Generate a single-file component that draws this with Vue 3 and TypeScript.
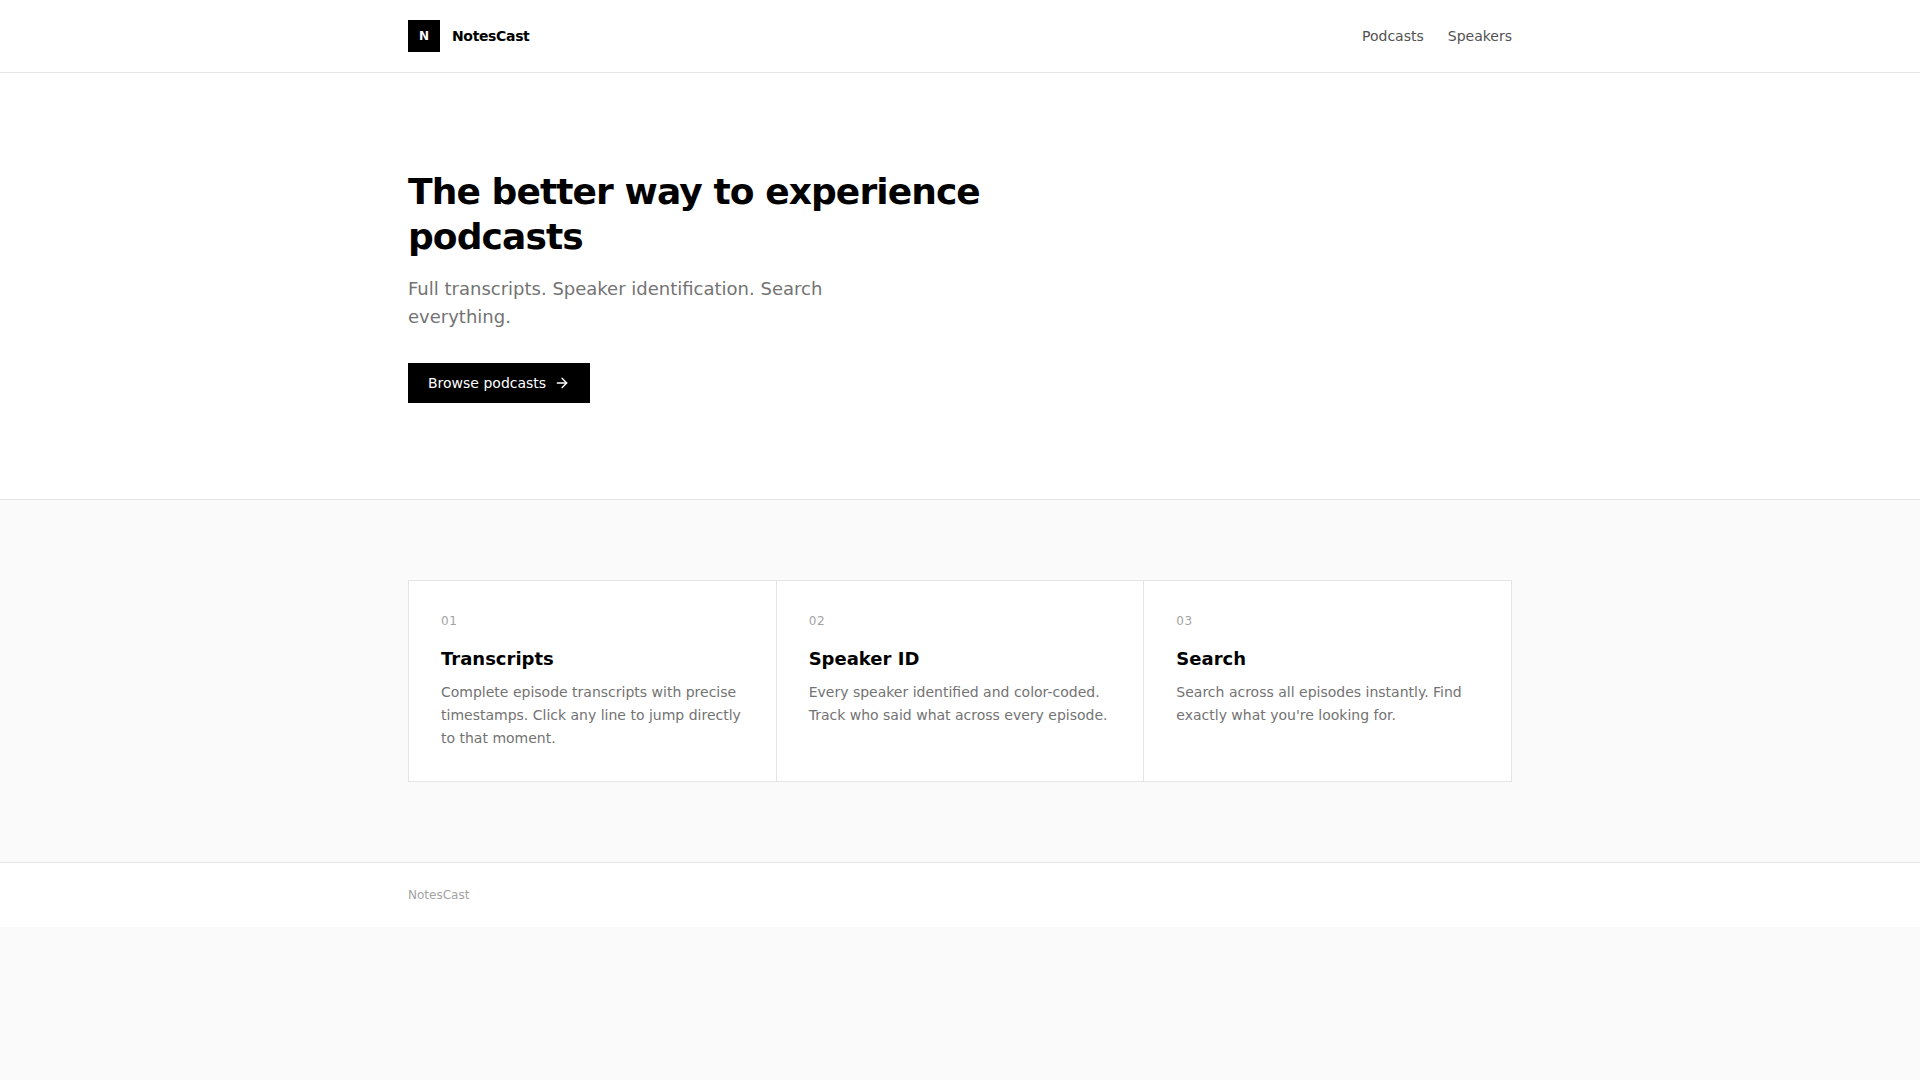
<script setup lang="ts">
interface Feature { num: string; title: string; text: string }
const features: Feature[] = [
  { num: '01', title: 'Transcripts', text: 'Complete episode transcripts with precise timestamps. Click any line to jump directly to that moment.' },
  { num: '02', title: 'Speaker ID', text: 'Every speaker identified and color-coded. Track who said what across every episode.' },
  { num: '03', title: 'Search', text: "Search across all episodes instantly. Find exactly what you're looking for." },
]
</script>

<template>
  <div class="page">
    <header class="header">
      <div class="container bar">
        <a class="brand"><span class="logo">N</span><span class="name">NotesCast</span></a>
        <nav class="nav"><a>Podcasts</a><a>Speakers</a></nav>
      </div>
    </header>
    <section class="hero">
      <div class="container">
        <h1>The better way to experience podcasts</h1>
        <p class="lead">Full transcripts. Speaker identification. Search everything.</p>
        <a class="cta">Browse podcasts
          <svg width="16" height="16" viewBox="0 0 24 24" fill="none" stroke="currentColor" stroke-width="2" stroke-linecap="round" stroke-linejoin="round"><path d="M5 12h14" /><path d="m12 5 7 7-7 7" /></svg>
        </a>
      </div>
    </section>
    <section class="features">
      <div class="container">
        <div class="grid">
          <article v-for="f in features" :key="f.num" class="card">
            <div class="num">{{ f.num }}</div>
            <h3>{{ f.title }}</h3>
            <p>{{ f.text }}</p>
          </article>
        </div>
      </div>
    </section>
    <footer class="footer">
      <div class="container">NotesCast</div>
    </footer>
  </div>
</template>

<style>
html, body { margin: 0; background: #fafafa; }
</style>

<style scoped>
.page { font-family: "DejaVu Sans", sans-serif; color: #000; background: #fafafa; }
.container { width: 1104px; margin: 0 auto; }
.header { background: #fff; border-bottom: 1px solid #e5e5e5; }
.bar { height: 72px; display: flex; align-items: center; justify-content: space-between; }
.brand { display: flex; align-items: center; gap: 12px; }
.logo { width: 32px; height: 32px; background: #000; color: #fff; display: flex; align-items: center; justify-content: center; font-size: 12px; font-weight: 700; }
.name { font-size: 14px; font-weight: 700; letter-spacing: -0.35px; }
.nav { display: flex; gap: 24px; font-size: 14px; color: #525252; }
.hero { background: #fff; padding: 96px 0 96px; border-bottom: 1px solid #e5e5e5; }
h1 { margin: 0; max-width: 672px; font-size: 36px; line-height: 45px; font-weight: 700; letter-spacing: -0.9px; }
.lead { margin: 16px 0 32px; max-width: 448px; font-size: 18px; line-height: 28px; color: #737373; }
.cta { display: inline-flex; align-items: center; gap: 8px; height: 40px; padding: 0 20px; background: #000; color: #fff; font-size: 14px; }
.features { padding: 80px 0; }
.grid { display: grid; grid-template-columns: repeat(3, 1fr); gap: 1px; background: #e5e5e5; border: 1px solid #e5e5e5; }
.card { padding: 32px; background: #fff; }
.num { font-size: 12px; line-height: 16px; color: #a3a3a3; margin-bottom: 16px; letter-spacing: 0.6px; }
h3 { margin: 0 0 8px; font-size: 18px; line-height: 28px; font-weight: 700; }
.card p { margin: 0; font-size: 14px; line-height: 22.75px; color: #737373; }
.footer { background: #fff; border-top: 1px solid #e5e5e5; padding: 24px 0; font-size: 12px; line-height: 16px; color: #a3a3a3; }
</style>
